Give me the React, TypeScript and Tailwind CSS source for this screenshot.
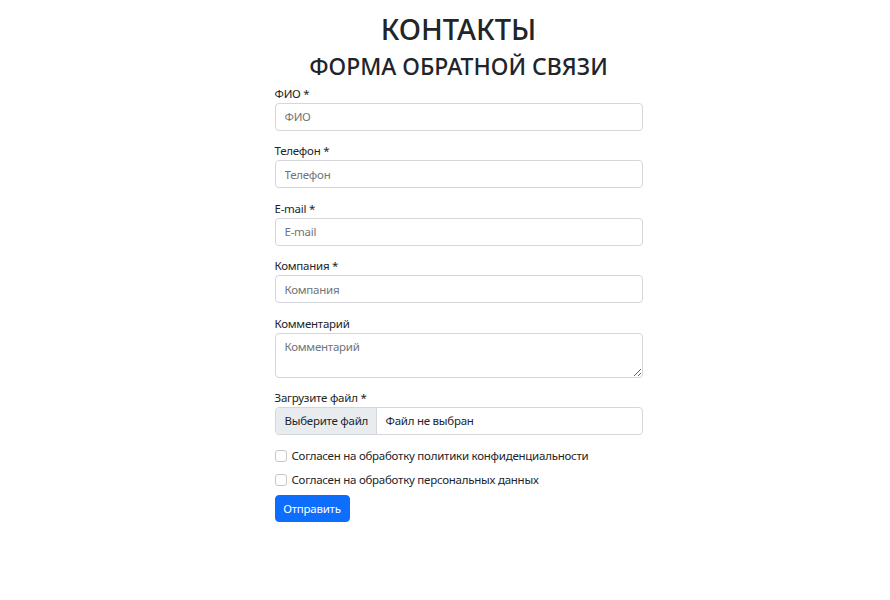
import React from "react";

const fields = [
  { label: "ФИО *", placeholder: "ФИО" },
  { label: "Телефон *", placeholder: "Телефон" },
  { label: "E-mail *", placeholder: "E-mail" },
  { label: "Компания *", placeholder: "Компания" },
];

function Check({ text }: { text: string }) {
  return (
    <label className="flex items-center h-[18px] mb-[6px]">
      <span className="w-[12px] h-[12px] border border-[#c4c8cc] rounded-[3px] bg-white mr-[5px] shrink-0" />
      <span>{text}</span>
    </label>
  );
}

export default function App() {
  return (
    <div
      className="min-h-[600px] bg-white text-[#212529] flex justify-center pl-[27px]"
      style={{ fontFamily: '"Noto Sans", "Open Sans", sans-serif' }}
    >
      <div className="w-[368px] pt-[11px] text-[11.5px] leading-[18px] tracking-[-0.25px]">
        <h1 className="text-center text-[29px] leading-[36px] font-medium tracking-normal mb-[4.5px]">КОНТАКТЫ</h1>
        <h2 className="text-center text-[23px] leading-[29px] font-medium tracking-normal mb-[4px]">ФОРМА ОБРАТНОЙ СВЯЗИ</h2>
        <form onSubmit={(e) => e.preventDefault()}>
          {fields.map((f) => (
            <div key={f.label} className="mb-[11.5px]">
              <div className="h-[18px]">{f.label}</div>
              <input
                placeholder={f.placeholder}
                className="block w-full h-[28px] px-[9px] border border-[#d3d7db] rounded-[4px] outline-none placeholder:text-[#6f757b]"
              />
            </div>
          ))}
          <div className="mb-[11.5px]">
            <div className="h-[18px]">Комментарий</div>
            <textarea
              placeholder="Комментарий"
              className="block w-full h-[45px] px-[9px] py-[4px] border border-[#d3d7db] rounded-[4px] outline-none resize-y placeholder:text-[#6f757b]"
            />
          </div>
          <div className="mb-[11.5px]">
            <div className="h-[18px]">Загрузите файл *</div>
            <div className="flex h-[28px] border border-[#d3d7db] rounded-[4px] overflow-hidden">
              <span className="flex items-center whitespace-nowrap px-[9px] w-[101px] bg-[#e9ecef] border-r border-[#d3d7db]">Выберите файл</span>
              <span className="flex items-center whitespace-nowrap px-[9px]">Файл не выбран</span>
            </div>
          </div>
          <Check text="Согласен на обработку политики конфиденциальности" />
          <Check text="Согласен на обработку персональных данных" />
          <button
            type="submit"
            className="mt-[0.5px] h-[27px] w-[75px] bg-[#0d6efd] text-white rounded-[4px] border border-[#0d6efd]"
          >
            Отправить
          </button>
        </form>
      </div>
    </div>
  );
}
